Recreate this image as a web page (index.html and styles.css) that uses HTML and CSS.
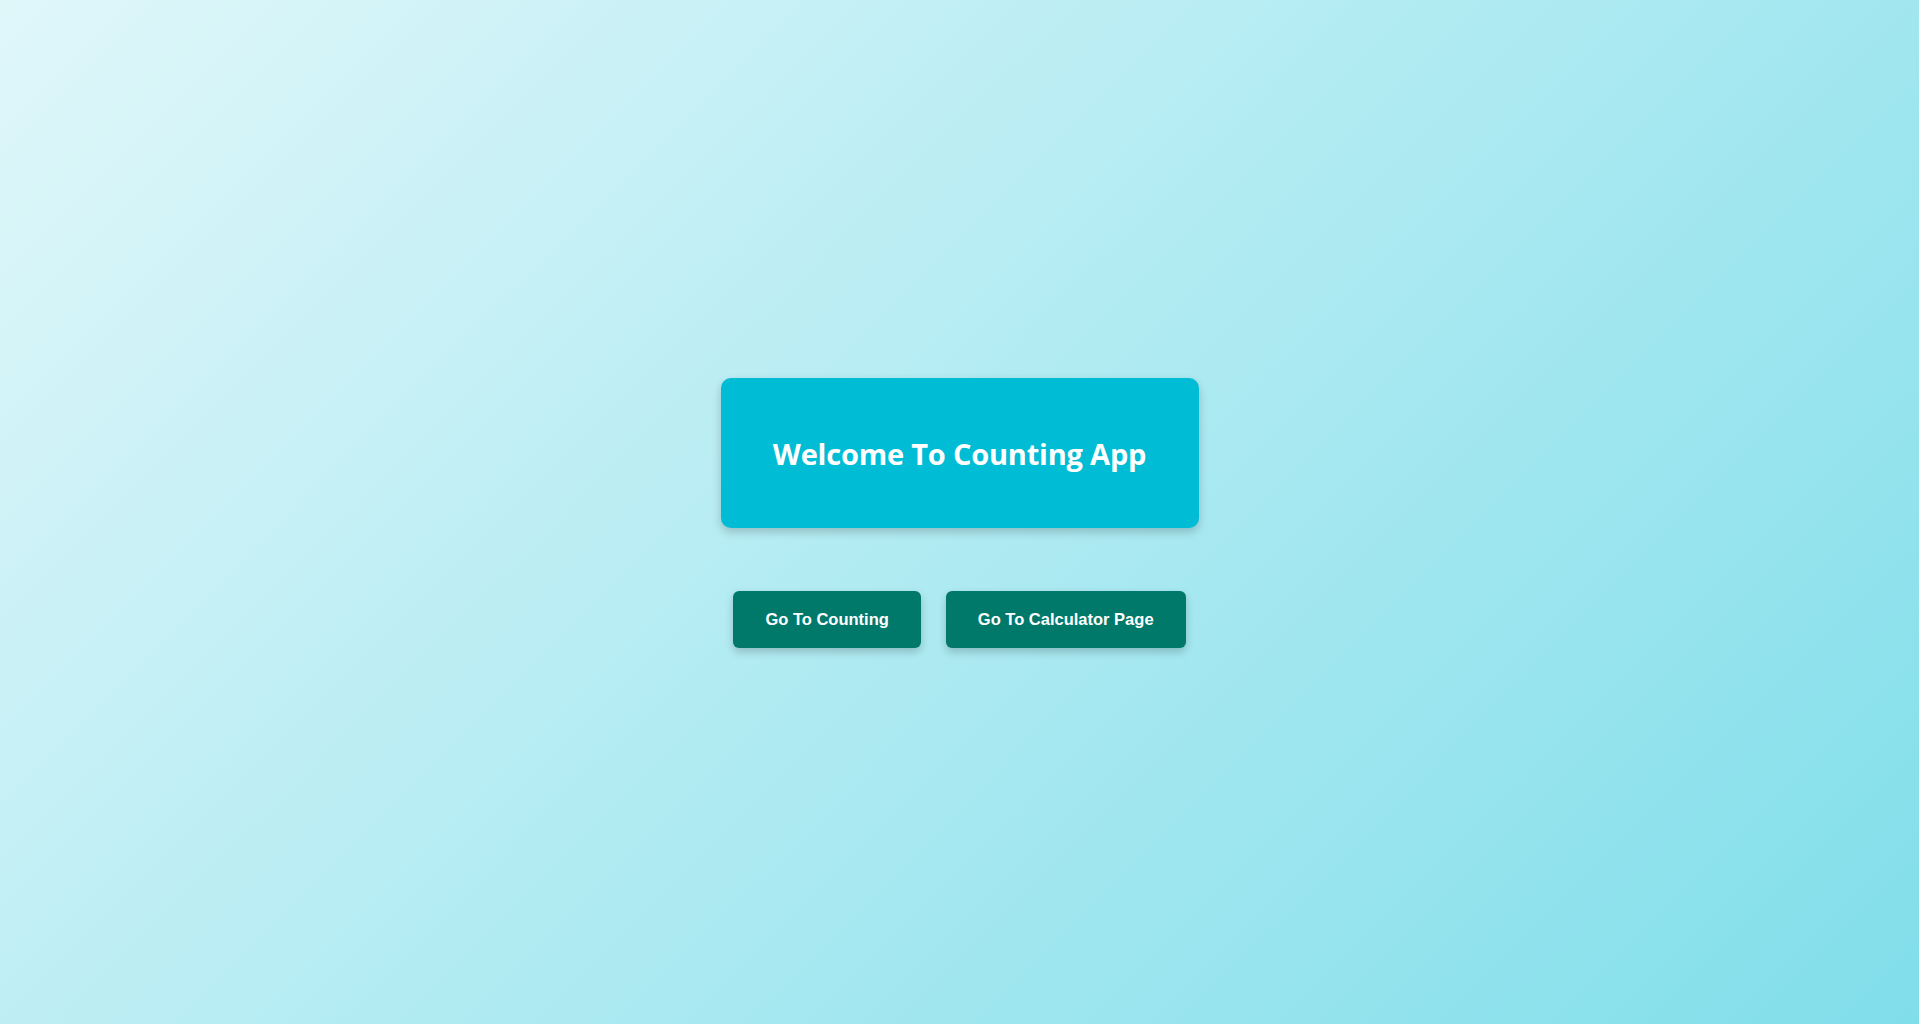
FILE: index.html
```html
<!DOCTYPE html>
<html lang="en">
<head>
<meta charset="utf-8">
<title>Counting App</title>
<link rel="stylesheet" href="styles.css">
</head>
<body>
<main class="page">
  <div class="card">
    <h1 class="title">Welcome To Counting App</h1>
  </div>
  <div class="actions">
    <button class="btn">Go To Counting</button>
    <button class="btn">Go To Calculator Page</button>
  </div>
</main>
</body>
</html>
```
FILE: styles.css
```css
html, body {
  margin: 0;
  padding: 0;
  height: 100%;
}
body {
  background: linear-gradient(135deg, #e0f7fa 0%, #80deea 100%);
  font-family: "Open Sans", "Noto Sans", sans-serif;
}
.page {
  min-height: 100vh;
  padding-top: 2px;
  box-sizing: border-box;
  display: flex;
  flex-direction: column;
  align-items: center;
  justify-content: center;
}
.card {
  width: 478px;
  height: 150px;
  box-sizing: border-box;
  background: #00bcd4;
  border-radius: 10px;
  box-shadow: 0 4px 10px rgba(0, 0, 0, 0.2);
  display: flex;
  align-items: center;
  justify-content: center;
}
.title {
  margin: 0;
  color: #ffffff;
  font-family: "Open Sans", sans-serif;
  font-weight: 700;
  font-size: 29px;
  letter-spacing: -0.2px;
}
.actions {
  margin-top: 63px;
  display: flex;
  gap: 25px;
}
.btn {
  height: 57px;
  padding: 0 32px;
  border: none;
  border-radius: 6px;
  background: #00796b;
  color: #ffffff;
  font-family: "Liberation Sans", Arial, sans-serif;
  font-weight: 700;
  font-size: 16.5px;
  box-shadow: 0 4px 8px rgba(0, 0, 0, 0.2);
  cursor: pointer;
}
```
